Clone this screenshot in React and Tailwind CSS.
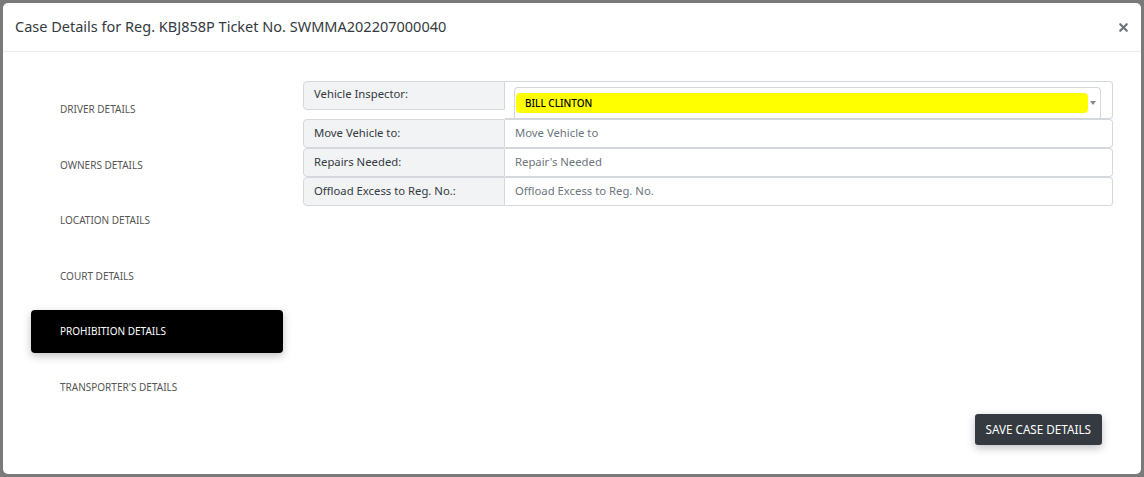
import { X } from 'lucide-react'

const navItems = [
  'DRIVER DETAILS',
  'OWNERS DETAILS',
  'LOCATION DETAILS',
  'COURT DETAILS',
  'PROHIBITION DETAILS',
  "TRANSPORTER'S DETAILS",
]

const fields = [
  { label: 'Move Vehicle to:', placeholder: 'Move Vehicle to' },
  { label: 'Repairs Needed:', placeholder: "Repair's Needed" },
  { label: 'Offload Excess to Reg. No.:', placeholder: 'Offload Excess to Reg. No.' },
]

export default function App() {
  const active = 'PROHIBITION DETAILS'

  return (
    <div className="h-[477px] w-[1144px] bg-[#7a7a7a] p-[3px] overflow-hidden"
      style={{ fontFamily: '"Noto Sans", "Open Sans", sans-serif' }}>
      <div className="h-full bg-white rounded-[5px] flex flex-col">

        {/* header */}
        <div className="h-[49px] flex items-center justify-between border-b border-[#e9ecef] pl-[12px] pr-[11px]">
          <h1 className="text-[14.5px] text-[#343a40]">
            Case Details for Reg. KBJ858P Ticket No. SWMMA202207000040
          </h1>
          <X className="w-[13px] h-[13px] text-[#6c757d]" strokeWidth={4} />
        </div>

        {/* body */}
        <div className="flex-1 flex pl-[28px] pr-[28px] gap-[20px]">
          <nav className="w-[252px] pt-[36px] flex flex-col gap-[12.5px]">
            {navItems.map(item => (
              <div key={item}
                className={`h-[43px] flex items-center pl-[29px] rounded-[4px] text-[10px] ${
                  item === active
                    ? 'bg-black text-white shadow-[0_3px_8px_rgba(0,0,0,0.25)]'
                    : 'text-[#555]'
                }`}>
                {item}
              </div>
            ))}
          </nav>

          <div className="flex-1 pt-[29px] pb-[29px] flex flex-col">
            <div className="text-[11.3px]">
              {/* inspector select */}
              <div className="flex items-start">
                <div className="w-[202px] h-[29px] shrink-0 flex items-center pl-[10px] pb-[2px] bg-[#f1f3f5] border border-[#d4d8dc] rounded-l-[4px] text-[#343a40]">
                  Vehicle Inspector:
                </div>
                <div className="flex-1 h-[38px] border border-[#d4d8dc] border-l-0 rounded-r-[4px] pl-[9px] pr-[11px] pt-[5px]">
                  <div className="h-[32px] border border-[#d4d8dc] border-b-0 rounded-t-[4px] flex items-start pt-[5px] pl-[1px] pr-[4px]">
                    <div className="flex-1 h-[20px] bg-[#ffff00] rounded-[4px] flex items-center pl-[9px] text-[10px] text-black font-medium">
                      BILL CLINTON
                    </div>
                    <span className="ml-[2px] mt-[8px] w-0 h-0 border-l-[3px] border-r-[3px] border-t-[4px] border-l-transparent border-r-transparent border-t-[#888]" />
                  </div>
                </div>
              </div>

              {fields.map(f => (
                <div key={f.label} className="flex">
                  <div className="w-[202px] h-[29px] shrink-0 flex items-center pl-[10px] bg-[#f1f3f5] border border-[#d4d8dc] rounded-l-[4px] text-[#343a40]">
                    {f.label}
                  </div>
                  <div className="flex-1 h-[29px] flex items-center pl-[10px] border border-l-0 border-[#d4d8dc] rounded-r-[4px] text-[#6c757d]">
                    {f.placeholder}
                  </div>
                </div>
              ))}
            </div>

            <div className="mt-auto flex justify-end pr-[11px]">
              <button className="h-[31px] px-[11px] bg-[#343a40] text-white text-[11.7px] rounded-[3px] shadow-[0_3px_8px_rgba(0,0,0,0.25)]">
                SAVE CASE DETAILS
              </button>
            </div>
          </div>
        </div>

      </div>
    </div>
  )
}
